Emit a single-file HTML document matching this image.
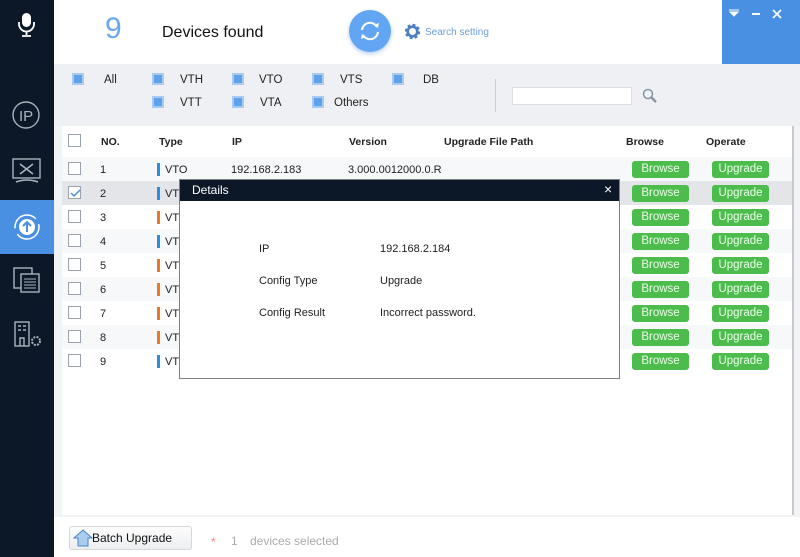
<!DOCTYPE html>
<html><head><meta charset="utf-8"><style>
*{margin:0;padding:0;box-sizing:border-box}
body{width:800px;height:557px;overflow:hidden;background:#fff;font-family:"Liberation Sans",sans-serif;font-size:11px;color:#222;position:relative}
.abs{position:absolute}
.side{left:0;top:0;width:54px;height:557px;background:#0c1828}
.cb{position:absolute;width:12px;height:12px;background:#5ea2ec;border:2px solid #a9c9ef}
.ck{position:absolute;width:13px;height:13px;border:1px solid #9aa3ad;background:#fff}
.row{position:absolute;left:62px;width:730px;height:24px}
.row span{position:absolute;top:7px}
.btn{position:absolute;top:4px;width:57px;height:17px;background:#4cbc4c;color:#eaffea;border-radius:3px;text-align:center;line-height:17px;font-size:11.5px}
.bar{position:absolute;left:95px;top:6px;width:3px;height:13px}
</style></head><body>
<div class="abs side"></div>
<svg class="abs" style="left:14px;top:10px" width="26" height="30" viewBox="0 0 26 30"><rect x="8" y="3" width="9" height="14" rx="4.5" fill="#fff"/><path d="M5 12v2a7.5 7.5 0 0 0 15 0v-2" stroke="#fff" stroke-width="1.8" fill="none"/><path d="M12.5 22v3M8 26h9" stroke="#fff" stroke-width="1.8"/></svg>
<svg class="abs" style="left:11px;top:100px" width="30" height="30"><circle cx="15" cy="15" r="13" stroke="#aab3bd" stroke-width="1.4" fill="none"/><text x="8" y="21" font-size="15" fill="#aab3bd" font-family="Liberation Sans">IP</text></svg>
<svg class="abs" style="left:11px;top:157px" width="32" height="28"><rect x="2" y="2" width="27" height="19" stroke="#aab3bd" stroke-width="1.4" fill="none"/><path d="M9 7l13 10M22 7l-13 10M5 25q11-4 22 0" stroke="#aab3bd" stroke-width="1.6" fill="none"/></svg>
<div class="abs" style="left:0;top:200px;width:54px;height:54px;background:#4a90e2"></div>
<svg class="abs" style="left:12px;top:212px" width="30" height="30"><circle cx="15" cy="15" r="12" stroke="#fff" stroke-width="1.5" fill="none" stroke-dasharray="30 6"/><circle cx="15" cy="15" r="8" fill="#fff"/><path d="M15 20v-9M11 14l4-4 4 4" stroke="#4a90e2" stroke-width="2" fill="none"/></svg>
<svg class="abs" style="left:13px;top:266px" width="28" height="28"><rect x="1" y="2" width="18" height="20" stroke="#aab3bd" stroke-width="1.4" fill="none"/><rect x="8" y="8" width="18" height="18" stroke="#aab3bd" stroke-width="1.4" fill="#0c1828"/><path d="M11 13h12M11 16h12M11 19h12M11 22h12" stroke="#aab3bd"/></svg>
<svg class="abs" style="left:14px;top:321px" width="30" height="28"><rect x="1" y="1" width="14" height="24" stroke="#aab3bd" stroke-width="1.4" fill="none"/><path d="M4 5h3M9 5h3M4 9h3M9 9h3M6 25v-8h4v8" stroke="#aab3bd" stroke-width="1.4" fill="none"/><circle cx="22" cy="20" r="4" stroke="#aab3bd" stroke-width="2" fill="none" stroke-dasharray="2 1.2"/></svg>

<div class="abs" style="left:105px;top:12px;font-size:30px;color:#6aa8ef">9</div>
<div class="abs" style="left:162px;top:24px;font-size:16px;color:#111">Devices found</div>
<div class="abs" style="left:349px;top:10px;width:42px;height:42px;border-radius:50%;background:#62a6f3;box-shadow:0 2px 4px rgba(80,140,220,.4)"></div>
<svg class="abs" style="left:357px;top:18px" width="26" height="26"><path d="M5 12a8 8 0 0 1 15-3M21 14a8 8 0 0 1-15 3" stroke="#fff" stroke-width="2" fill="none"/><path d="M17 7l4 3 1-5zM9 19l-4-3-1 5z" fill="#fff"/></svg>
<svg class="abs" style="left:404px;top:23px" width="17" height="17" viewBox="0 0 16 16"><circle cx="8" cy="8" r="5.5" stroke="#4a7fc4" stroke-width="3.5" fill="none" stroke-dasharray="2.4 1.9"/><circle cx="8" cy="8" r="4.5" stroke="#4a7fc4" stroke-width="2.5" fill="none"/></svg>
<div class="abs" style="left:425px;top:27px;font-size:10px;color:#6c9fd6">Search setting</div>
<div class="abs" style="left:722px;top:0;width:78px;height:64px;background:#4a90e2"></div>
<svg class="abs" style="left:726px;top:6px" width="70" height="16"><path d="M3 4h10M4 6h8l-4 4z" stroke="#fff" fill="#fff"/><path d="M26 8h8" stroke="#fff" stroke-width="2"/><path d="M47 4l8 8M55 4l-8 8" stroke="#fff" stroke-width="1.6"/></svg>

<div class="abs" style="left:54px;top:64px;width:746px;height:62px;background:#eef0f3"></div>
<div class="cb" style="left:72px;top:73px"></div><div class="abs" style="left:104px;top:74px;font-size:11.5px">All</div>
<div class="cb" style="left:152px;top:73px"></div><div class="abs" style="left:180px;top:74px;font-size:11.5px">VTH</div>
<div class="cb" style="left:232px;top:73px"></div><div class="abs" style="left:259px;top:74px;font-size:11.5px">VTO</div>
<div class="cb" style="left:312px;top:73px"></div><div class="abs" style="left:340px;top:74px;font-size:11.5px">VTS</div>
<div class="cb" style="left:392px;top:73px"></div><div class="abs" style="left:423px;top:74px;font-size:11.5px">DB</div>
<div class="cb" style="left:152px;top:96px"></div><div class="abs" style="left:180px;top:97px;font-size:11.5px">VTT</div>
<div class="cb" style="left:232px;top:96px"></div><div class="abs" style="left:260px;top:97px;font-size:11.5px">VTA</div>
<div class="cb" style="left:312px;top:96px"></div><div class="abs" style="left:334px;top:97px;font-size:11.5px">Others</div>
<div class="abs" style="left:495px;top:79px;width:1px;height:33px;background:#ccd"></div>
<div class="abs" style="left:512px;top:87px;width:120px;height:18px;background:#fff;border:1px solid #dcdfe4;border-radius:2px"></div>
<svg class="abs" style="left:642px;top:88px" width="16" height="16"><circle cx="6" cy="6" r="4.5" stroke="#8a96a3" stroke-width="1.5" fill="#eef3f8"/><path d="M9 9l5 5" stroke="#8a96a3" stroke-width="2.5"/></svg>

<div class="abs" style="left:54px;top:126px;width:746px;height:391px;background:#f2f3f5"></div>
<div class="abs" style="left:62px;top:126px;width:732px;height:389px;background:#fff;border-right:2px solid #c8c9cc"></div>
<div class="row" style="top:129px;font-weight:bold;font-size:10.5px">
<div class="ck" style="left:6px;top:5px"></div>
<span style="left:39px">NO.</span><span style="left:97px">Type</span><span style="left:170px">IP</span><span style="left:287px">Version</span><span style="left:382px">Upgrade File Path</span><span style="left:564px">Browse</span><span style="left:644px">Operate</span></div>

<div class="row" style="top:157px;background:#f7f8fa"><div class="ck" style="left:6px;top:5px"></div><span style="left:38px">1</span><div class="bar" style="background:#2f8be0"></div><span style="left:103px">VTO</span><span style="left:169px">192.168.2.183</span><span style="left:286px">3.000.0012000.0.R</span><div class="btn" style="left:570px">Browse</div><div class="btn" style="left:650px">Upgrade</div></div>
<div class="row" style="top:181px;background:#e4e5e8"><div class="ck" style="left:6px;top:5px"></div><svg class="abs" style="left:8px;top:8px" width="11" height="9"><path d="M1 4l3 3 6-6" stroke="#4a8fd8" stroke-width="1.5" fill="none"/></svg><span style="left:38px">2</span><div class="bar" style="background:#2f8be0"></div><span style="left:103px">VTO</span><div class="btn" style="left:570px">Browse</div><div class="btn" style="left:650px">Upgrade</div></div>
<div class="row" style="top:205px"><div class="ck" style="left:6px;top:5px"></div><span style="left:38px">3</span><div class="bar" style="background:#ea7a2a"></div><span style="left:103px">VTH</span><div class="btn" style="left:570px">Browse</div><div class="btn" style="left:650px">Upgrade</div></div>
<div class="row" style="top:229px;background:#f7f8fa"><div class="ck" style="left:6px;top:5px"></div><span style="left:38px">4</span><div class="bar" style="background:#2f8be0"></div><span style="left:103px">VTO</span><div class="btn" style="left:570px">Browse</div><div class="btn" style="left:650px">Upgrade</div></div>
<div class="row" style="top:253px"><div class="ck" style="left:6px;top:5px"></div><span style="left:38px">5</span><div class="bar" style="background:#ea7a2a"></div><span style="left:103px">VTH</span><div class="btn" style="left:570px">Browse</div><div class="btn" style="left:650px">Upgrade</div></div>
<div class="row" style="top:277px;background:#f7f8fa"><div class="ck" style="left:6px;top:5px"></div><span style="left:38px">6</span><div class="bar" style="background:#ea7a2a"></div><span style="left:103px">VTH</span><div class="btn" style="left:570px">Browse</div><div class="btn" style="left:650px">Upgrade</div></div>
<div class="row" style="top:301px"><div class="ck" style="left:6px;top:5px"></div><span style="left:38px">7</span><div class="bar" style="background:#ea7a2a"></div><span style="left:103px">VTH</span><div class="btn" style="left:570px">Browse</div><div class="btn" style="left:650px">Upgrade</div></div>
<div class="row" style="top:325px;background:#f7f8fa"><div class="ck" style="left:6px;top:5px"></div><span style="left:38px">8</span><div class="bar" style="background:#ea7a2a"></div><span style="left:103px">VTH</span><div class="btn" style="left:570px">Browse</div><div class="btn" style="left:650px">Upgrade</div></div>
<div class="row" style="top:349px"><div class="ck" style="left:6px;top:5px"></div><span style="left:38px">9</span><div class="bar" style="background:#2f8be0"></div><span style="left:103px">VTO</span><div class="btn" style="left:570px">Browse</div><div class="btn" style="left:650px">Upgrade</div></div>

<div class="abs" style="left:179px;top:179px;width:441px;height:200px;background:#fff;border:1px solid #7d8087"></div>
<div class="abs" style="left:180px;top:180px;width:439px;height:21px;background:#0c1828;color:#fff;font-size:12px;padding:3px 0 0 12px">Details</div>
<div class="abs" style="left:604px;top:181px;color:#fff;font-size:14px">×</div>
<div class="abs" style="left:259px;top:243px">IP</div><div class="abs" style="left:380px;top:243px">192.168.2.184</div>
<div class="abs" style="left:259px;top:275px">Config Type</div><div class="abs" style="left:380px;top:275px">Upgrade</div>
<div class="abs" style="left:259px;top:307px">Config Result</div><div class="abs" style="left:380px;top:307px">Incorrect password.</div>

<div class="abs" style="left:69px;top:526px;width:123px;height:24px;background:linear-gradient(#fdfdfd,#eceef0);border:1px solid #d6d8db;border-radius:3px"></div>
<svg class="abs" style="left:72px;top:528px" width="22" height="20"><path d="M2 10l9-8 9 8h-4v8H6v-8z" fill="#a8cdee" stroke="#4a87c4"/></svg>
<div class="abs" style="left:92px;top:531px;font-size:12px;color:#111">Batch Upgrade</div>
<div class="abs" style="left:211px;top:535px;color:#e88;font-size:12px">*</div>
<div class="abs" style="left:231px;top:534px;color:#aaa;font-size:12px">1</div>
<div class="abs" style="left:250px;top:534px;color:#aaa;font-size:12px">devices selected</div>
</body></html>
